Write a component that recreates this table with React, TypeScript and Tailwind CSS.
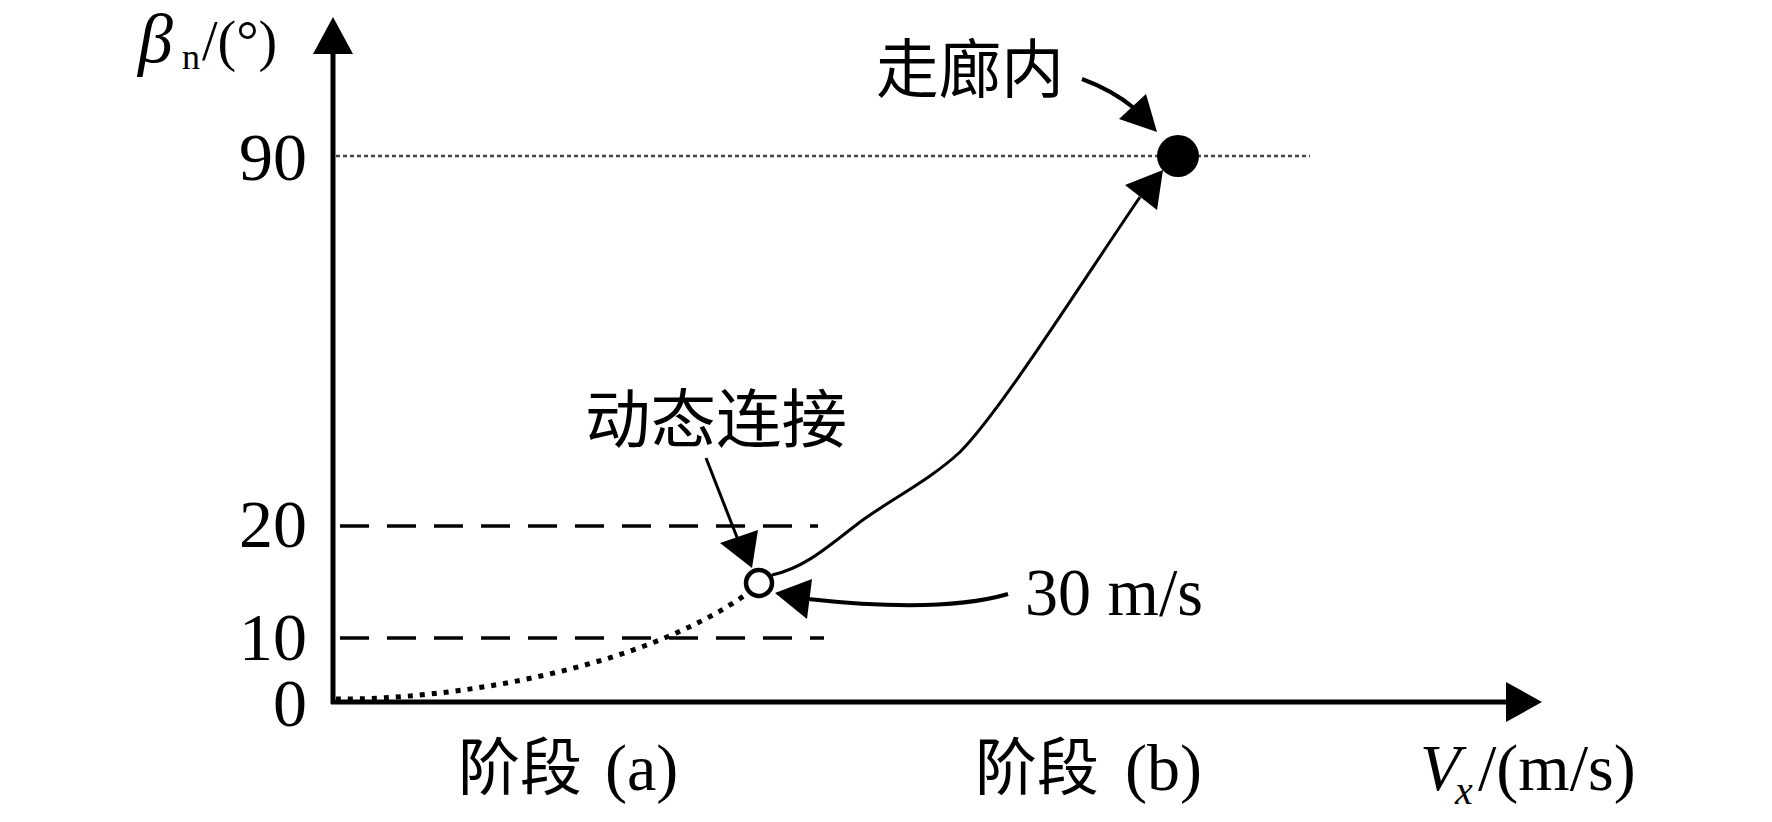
const serif = '"Liberation Serif", "Times New Roman", serif';
const cjk = '"Noto Sans CJK SC", "Liberation Serif", sans-serif';

// Dashed reference lines at 10 and 20 degrees
const refLines = [
  { y: 526, x2: 818 },
  { y: 638, x2: 824 },
];

const ticks = [
  { label: '90', y: 180 },
  { label: '20', y: 547 },
  { label: '10', y: 660 },
  { label: '0', y: 726 },
];

function Chart() {
  return (
    <svg width="1772" height="822" viewBox="0 0 1772 822" className="block">
      {/* axes */}
      <line x1="333" y1="704" x2="333" y2="52" stroke="#000" strokeWidth="5" />
      <polygon points="333,17 313,54 353,54" fill="#000" />
      <line x1="331" y1="702" x2="1508" y2="702" stroke="#000" strokeWidth="5" />
      <polygon points="1542,702 1506,682 1506,722" fill="#000" />

      {/* 90 deg dotted line */}
      <line x1="336" y1="156" x2="1310" y2="156" stroke="#444" strokeWidth="2.5" strokeDasharray="4 3" />

      {refLines.map((l) => (
        <line key={l.y} x1="340" y1={l.y} x2={l.x2} y2={l.y} stroke="#000" strokeWidth="3.5" strokeDasharray="29 18" />
      ))}

      {/* stage (a) dotted curve */}
      <path d="M 336 699 C 450 700, 640 670, 748 593" fill="none" stroke="#000" strokeWidth="5" strokeDasharray="5 7" />

      {/* stage (b) solid curve */}
      <path
        d="M 772 575 C 805 568, 830 545, 860 522 C 890 500, 930 480, 960 452 C 1000 412, 1080 285, 1140 197"
        fill="none"
        stroke="#000"
        strokeWidth="3"
      />
      <polygon points="1163,170 1125,185 1157,210" fill="#000" />

      {/* points */}
      <circle cx="759" cy="583" r="13" fill="#fff" stroke="#000" strokeWidth="4.5" />
      <circle cx="1178" cy="156" r="21" fill="#000" />

      {/* annotation arrows */}
      <path d="M 1082 79 Q 1112 90 1134 108" fill="none" stroke="#000" strokeWidth="4" />
      <polygon points="1157,132 1119,119 1146,94" fill="#000" />

      <line x1="706" y1="458" x2="740" y2="545" stroke="#000" strokeWidth="3" />
      <polygon points="752,568 720,543 758,530" fill="#000" />

      <path d="M 1008 594 C 960 608, 890 608, 808 599" fill="none" stroke="#000" strokeWidth="4" />
      <polygon points="775,593 812,579 807,619" fill="#000" />

      {/* tick labels */}
      {ticks.map((t) => (
        <text key={t.label} x="307" y={t.y} textAnchor="end" fontFamily={serif} fontSize="68">
          {t.label}
        </text>
      ))}

      {/* y axis title */}
      <text x="138" y="62" fontFamily={serif} fontSize="70" fontStyle="italic">β</text>
      <text x="182" y="69" fontFamily={serif} fontSize="36">n</text>
      <text x="202" y="60" fontFamily={serif} fontSize="56">/(°)</text>

      {/* x axis title */}
      <text x="1420" y="790" fontFamily={serif} fontSize="66" fontStyle="italic">V</text>
      <text x="1455" y="804" fontFamily={serif} fontSize="40" fontStyle="italic">x</text>
      <text x="1478" y="790" fontFamily={serif} fontSize="66">/(m/s)</text>

      {/* stage labels */}
      <text x="458" y="790" fontFamily={cjk} fontSize="62" textLength="124" lengthAdjust="spacingAndGlyphs">阶段</text>
      <text x="605" y="790" fontFamily={serif} fontSize="66">(a)</text>
      <text x="975" y="790" fontFamily={cjk} fontSize="62" textLength="124" lengthAdjust="spacingAndGlyphs">阶段</text>
      <text x="1125" y="790" fontFamily={serif} fontSize="66">(b)</text>

      {/* annotations */}
      <text x="876" y="92" fontFamily={cjk} fontSize="64" textLength="188" lengthAdjust="spacingAndGlyphs">走廊内</text>
      <text x="585" y="442" fontFamily={cjk} fontSize="64" textLength="262" lengthAdjust="spacingAndGlyphs">动态连接</text>
      <text x="1025" y="615" fontFamily={serif} fontSize="68" textLength="178" lengthAdjust="spacingAndGlyphs">30 m/s</text>
    </svg>
  );
}

export default function App() {
  return (
    <div className="w-[1772px] h-[822px] bg-white overflow-hidden">
      <Chart />
    </div>
  );
}
